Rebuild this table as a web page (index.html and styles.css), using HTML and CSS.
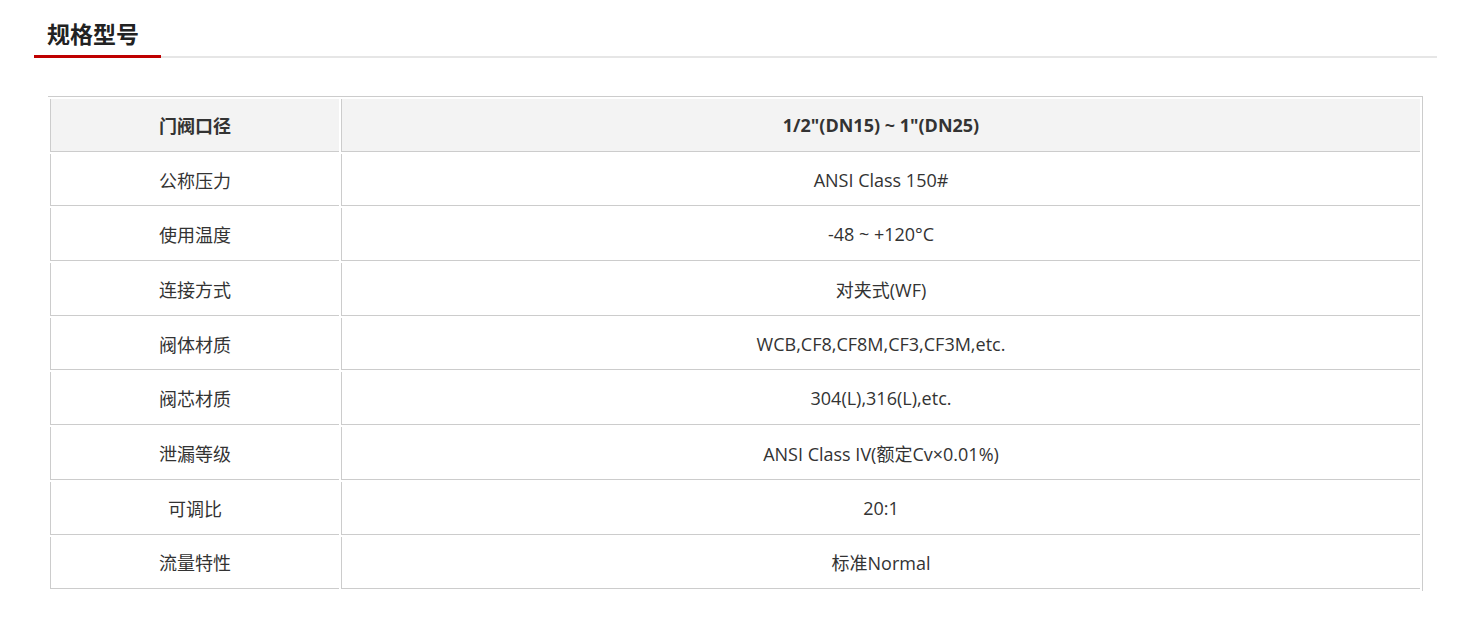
FILE: index.html
```html
<!DOCTYPE html>
<html lang="zh-CN">
<head>
<meta charset="utf-8">
<title>规格型号</title>
<link rel="stylesheet" href="styles.css">
</head>
<body>
<section class="spec">
  <div class="spec-head"><h2 class="spec-title">规格型号</h2></div>
  <table class="spec-table">
    <colgroup><col class="c1"><col class="c2"></colgroup>
    <thead>
      <tr><th>门阀口径</th><th>1/2"(DN15) ~ 1"(DN25)</th></tr>
    </thead>
    <tbody>
      <tr><td>公称压力</td><td>ANSI Class 150#</td></tr>
      <tr><td>使用温度</td><td>-48 ~ +120°C</td></tr>
      <tr><td>连接方式</td><td>对夹式(WF)</td></tr>
      <tr><td>阀体材质</td><td>WCB,CF8,CF8M,CF3,CF3M,etc.</td></tr>
      <tr><td>阀芯材质</td><td>304(L),316(L),etc.</td></tr>
      <tr><td>泄漏等级</td><td>ANSI Class IV(额定Cv×0.01%)</td></tr>
      <tr><td>可调比</td><td>20:1</td></tr>
      <tr><td>流量特性</td><td>标准Normal</td></tr>
    </tbody>
  </table>
</section>
</body>
</html>
```
FILE: styles.css
```css
html, body {
  margin: 0;
  padding: 0;
  background: #fff;
}
body {
  font-family: "Open Sans", "Noto Sans CJK SC", sans-serif;
  color: #333;
}
.spec {
  width: 1403px;
  margin-left: 34px;
}
.spec-head {
  border-bottom: 2px solid #e6e6e6;
  height: 58px;
  box-sizing: border-box;
}
.spec-title {
  margin: 0;
  box-sizing: border-box;
  width: 127px;
  height: 58px;
  padding: 17px 0 0 13px;
  font-family: "Noto Sans CJK SC", sans-serif;
  font-size: 23px;
  line-height: 33px;
  font-weight: bold;
  color: #222;
  border-bottom: 3px solid #bf0000;
}
.spec-table {
  margin: 38px 0 0 14px;
  width: 1375px;
  border-collapse: separate;
  border-spacing: 2px;
  border-top: 1px solid #ccc;
  border-right: 1px solid #ccc;
  table-layout: fixed;
  font-size: 18px;
}
.spec-table .c1 { width: 289px; }
.spec-table th,
.spec-table td {
  padding: 0;
  height: 52.7px;
  box-sizing: border-box;
  text-align: center;
  vertical-align: middle;
  border-left: 1px solid #ccc;
  border-bottom: 1px solid #ccc;
  color: #333;
}
.spec-table th {
  background: #f3f3f3;
  font-weight: bold;
}
.spec-table td {
  font-weight: normal;
}
```
